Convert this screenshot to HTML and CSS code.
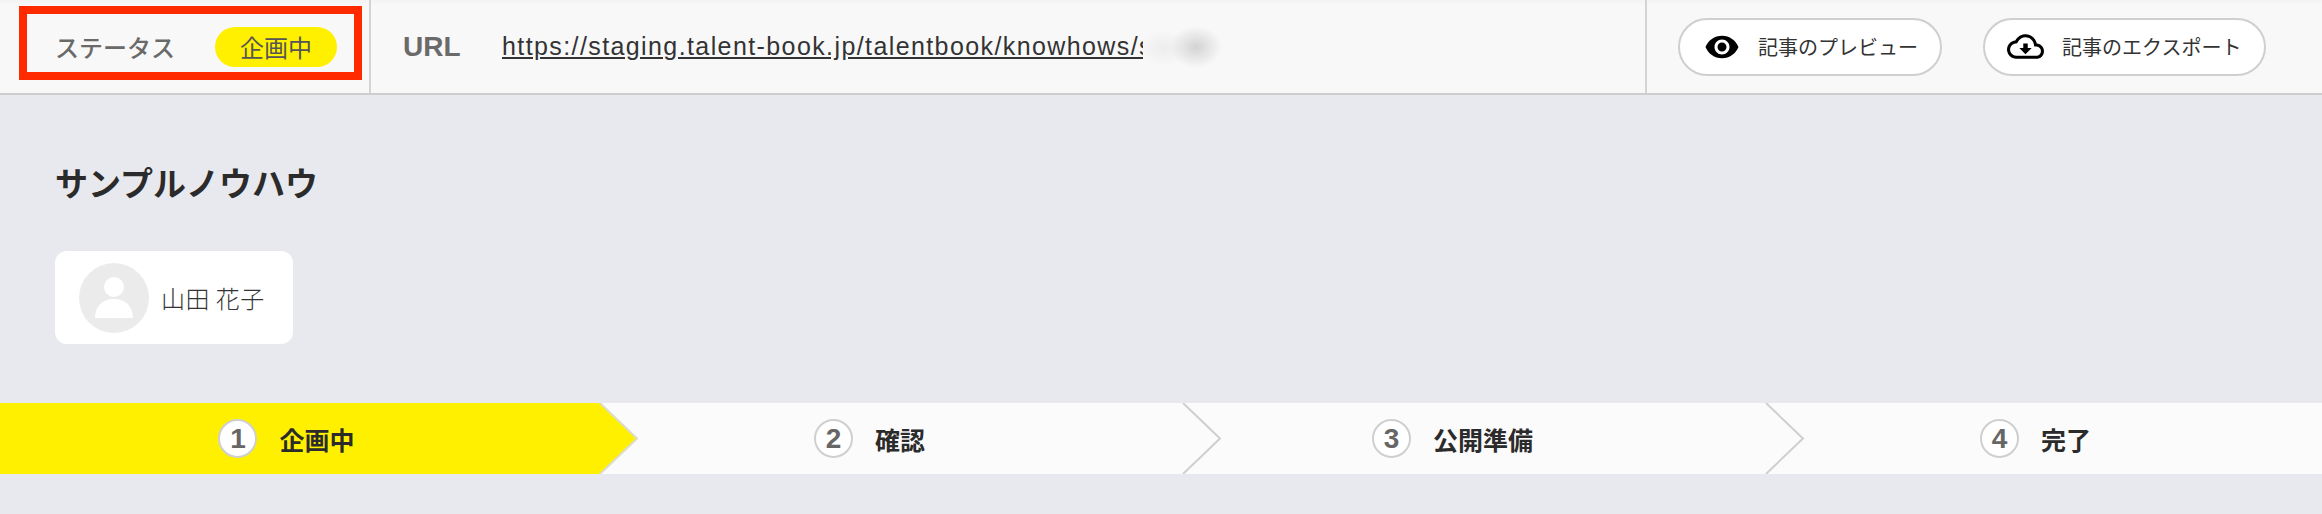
FILE: index.html
```html
<!DOCTYPE html>
<html lang="ja">
<head>
  <meta charset="UTF-8">
  <title>サンプルノウハウ</title>
  <link rel="stylesheet" href="styles.css">
</head>
<body>

  <!-- Header -->
  <div class="header">
    <div class="status-cell">
      <span class="status-label">ステータス</span>
      <span class="status-pill">企画中</span>
    </div>
    <div class="url-cell">
      <span class="url-label">URL</span>
      <a class="url-link" href="#">https://staging.talent-book.jp/talentbook/knowhows/s</a>
      <span class="url-blur"></span>
    </div>
    <div class="action-cell">
      <button class="action-button preview">
        <svg class="icon-eye" viewBox="0 0 24 24"><path d="M12 4.5C7 4.5 2.73 7.61 1 12c1.73 4.39 6 7.5 11 7.5s9.27-3.11 11-7.5c-1.73-4.39-6-7.5-11-7.5zM12 17c-2.76 0-5-2.24-5-5s2.24-5 5-5 5 2.24 5 5-2.24 5-5 5zm0-8c-1.66 0-3 1.34-3 3s1.34 3 3 3 3-1.34 3-3-1.34-3-3-3z"/></svg>
        記事のプレビュー
      </button>
      <button class="action-button export">
        <svg class="icon-cloud" viewBox="0 0 24 24"><path d="M19.35 10.04C18.67 6.59 15.64 4 12 4 9.11 4 6.6 5.64 5.35 8.04 2.34 8.36 0 10.91 0 14c0 3.31 2.69 6 6 6h13c2.76 0 5-2.24 5-5 0-2.64-2.05-4.78-4.65-4.96zM19 18H6c-2.21 0-4-1.79-4-4 0-2.05 1.53-3.76 3.56-3.97l1.07-.11.5-.95C8.08 7.14 9.94 6 12 6c2.62 0 4.88 1.86 5.39 4.43l.3 1.5 1.53.11c1.56.1 2.78 1.41 2.78 2.96 0 1.65-1.35 3-3 3zm-5.55-8h-2.9v3H8l4 4 4-4h-2.55z"/></svg>
        記事のエクスポート
      </button>
    </div>
    <!-- Red annotation over the status -->
    <div class="highlight"></div>
  </div>

  <!-- Title and author -->
  <div class="main">
    <h1 class="title">サンプルノウハウ</h1>
    <div class="author">
      <svg class="avatar" viewBox="0 0 70 70">
        <circle cx="35" cy="35" r="35" fill="#ebebeb"/>
        <circle cx="35" cy="24" r="10" fill="#fff"/>
        <path d="M16 55c0-12 8-19 19-19s19 7 19 19z" fill="#fff"/>
      </svg>
      <span class="author-name">山田 花子</span>
    </div>
  </div>

  <!-- Steps -->
  <div class="steps">
    <div class="step active">
      <span class="step-num">1</span>
      <span class="step-text">企画中</span>
      <svg class="step-arrow" viewBox="0 0 62 71"><path class="arrow-fill" d="M0 0H23L60 35.5 23 71H0z"/><path class="arrow-line" d="M23 0L60 35.5 23 71"/></svg>
    </div>
    <div class="step">
      <span class="step-num">2</span>
      <span class="step-text">確認</span>
      <svg class="step-arrow" viewBox="0 0 62 71"><path class="arrow-fill" d="M0 0H23L60 35.5 23 71H0z"/><path class="arrow-line" d="M23 0L60 35.5 23 71"/></svg>
    </div>
    <div class="step">
      <span class="step-num">3</span>
      <span class="step-text">公開準備</span>
      <svg class="step-arrow" viewBox="0 0 62 71"><path class="arrow-fill" d="M0 0H23L60 35.5 23 71H0z"/><path class="arrow-line" d="M23 0L60 35.5 23 71"/></svg>
    </div>
    <div class="step">
      <span class="step-num">4</span>
      <span class="step-text">完了</span>
    </div>
  </div>

</body>
</html>
```

FILE: styles.css
```css
/* General Styles */
body {
  font-family: "Noto Sans CJK JP", "Liberation Sans", sans-serif;
  margin: 0;
  padding: 0;
  width: 2322px;
  height: 514px;
  overflow: hidden;
  background-color: #e8e9ee;
  color: #2b2b2b;
}

/* Header */
.header {
  position: relative;
  display: flex;
  height: 93px;
  background: linear-gradient(#f3f3f3, #f8f8f8 5px);
  border-bottom: 2px solid #cdcdcd;
}

.status-cell {
  display: flex;
  align-items: center;
  flex: none;
  width: 371px;
  padding-left: 55px;
  box-sizing: border-box;
  border-right: 2px solid #d4d4d4;
}

.status-label {
  font-size: 24px;
  font-weight: 500;
  color: #6a6a6a;
  width: 160px;
  white-space: nowrap;
}

.status-pill {
  width: 122px;
  height: 40px;
  line-height: 39px;
  border-radius: 20px;
  background-color: #fff000;
  color: #555;
  font-size: 24px;
  text-align: center;
}

.highlight {
  position: absolute;
  left: 19px;
  top: 6px;
  width: 327px;
  height: 58px;
  border: 8px solid #ff2a00;
}

.url-cell {
  display: flex;
  align-items: center;
  flex: 1;
  padding-left: 32px;
}

.url-label {
  font-family: "Liberation Sans", sans-serif;
  font-size: 28px;
  font-weight: bold;
  color: #6a6a6a;
  width: 99px;
}

.url-link {
  font-family: "Liberation Sans", sans-serif;
  font-size: 25px;
  letter-spacing: 1.4px;
  color: #333;
  white-space: nowrap;
}

.url-blur {
  width: 80px;
  height: 41px;
  margin-left: -10px;
  background:
    radial-gradient(ellipse 26px 21px at 53px 21px, #d3d3d3, rgba(248, 248, 248, 0)),
    radial-gradient(ellipse 24px 18px at 20px 22px, #ededed, rgba(248, 248, 248, 0)),
    #f8f8f8;
}

.action-cell {
  display: flex;
  align-items: center;
  gap: 41px;
  flex: none;
  width: 677px;
  box-sizing: border-box;
  padding-left: 31px;
  border-left: 2px solid #d4d4d4;
}

.action-button {
  display: flex;
  align-items: center;
  height: 58px;
  padding: 0;
  box-sizing: border-box;
  background-color: #fff;
  border: 2px solid #cfcfcf;
  border-radius: 29px;
  font-family: inherit;
  font-size: 20px;
  color: #333;
  white-space: nowrap;
}

.action-button.preview {
  width: 264px;
  padding-left: 24px;
  gap: 18px;
}

.action-button.export {
  width: 283px;
  padding-left: 22px;
  gap: 18px;
}

.icon-eye {
  width: 36px;
  height: 36px;
}

.icon-cloud {
  width: 37px;
  height: 37px;
}

/* Title and author */
.main {
  padding: 67px 0 0 55px;
}

.title {
  margin: 0 0 49px;
  font-size: 33px;
  line-height: 40px;
  font-weight: bold;
  color: #2b2b2b;
}

.author {
  display: flex;
  align-items: center;
  width: 238px;
  height: 93px;
  padding-left: 24px;
  box-sizing: border-box;
  gap: 12px;
  background-color: #fff;
  border-radius: 12px;
}

.avatar {
  width: 70px;
  height: 70px;
}

.author-name {
  font-size: 24px;
  font-weight: 300;
  letter-spacing: 0.5px;
  color: #333;
  white-space: nowrap;
}

/* Steps */
.steps {
  display: flex;
  margin: 59px 0 0 -5px;
  height: 71px;
  width: 2332px;
}

.step {
  position: relative;
  display: flex;
  align-items: center;
  justify-content: center;
  gap: 22px;
  flex: 1;
  background-color: #fbfbfb;
}

.step.active {
  background-color: #fff000;
  z-index: 1;
}

.step-num {
  width: 39px;
  height: 39px;
  line-height: 35px;
  box-sizing: border-box;
  border: 2px solid #cfcfcf;
  border-radius: 50%;
  background-color: #fff;
  color: #666;
  font-family: "Liberation Sans", sans-serif;
  font-size: 28px;
  font-weight: bold;
  text-align: center;
}

.step-text {
  font-size: 25px;
  font-weight: bold;
  color: #2b2b2b;
}

.step-arrow {
  position: absolute;
  top: 0;
  right: -61px;
  width: 62px;
  height: 71px;
  z-index: 1;
}

.arrow-fill {
  fill: #fbfbfb;
}

.arrow-line {
  fill: none;
  stroke: #cfcfcf;
  stroke-width: 2;
}

.step.active .arrow-fill {
  fill: #fff000;
}

.step.active .arrow-line {
  stroke: #dcdcc8;
}
```
